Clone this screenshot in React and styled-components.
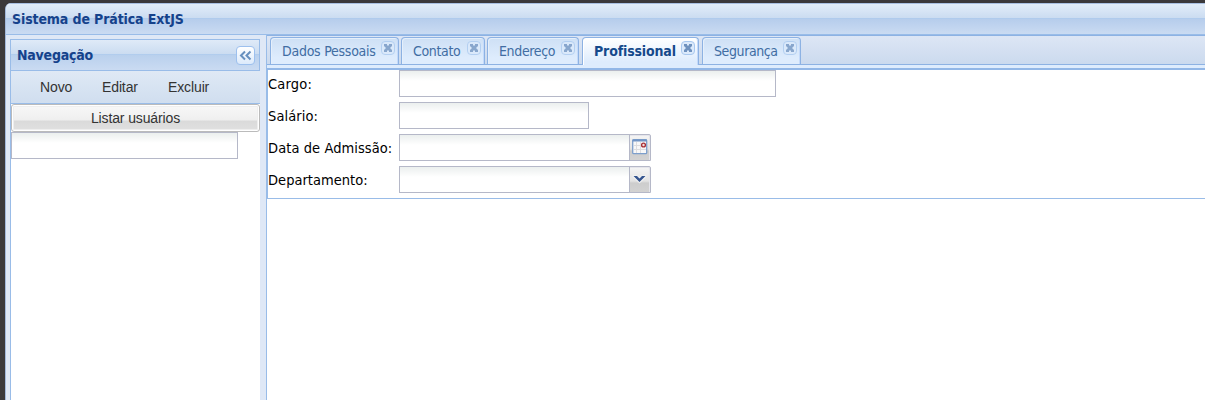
import React from "react";
import styled, { createGlobalStyle } from "styled-components";

const Global = createGlobalStyle`
  * { box-sizing: border-box; }
  html, body { margin: 0; height: 400px; overflow: hidden; background: #3b393b; }
  body { font-family: Tahoma, "DejaVu Sans Condensed", "DejaVu Sans", sans-serif; font-stretch: condensed; font-size: 14px; }
`;

const Page = styled.div`
  height: 400px;
  padding: 3px 0 0 5px;
  background: #3b393b;
`;

const Window = styled.div`
  height: 397px;
  display: flex;
  flex-direction: column;
  border-left: 1px solid #a2b8db;
  border-top-left-radius: 6px;
  background: #dfe8f6;
  overflow: hidden;
`;

const WindowHeader = styled.header`
  flex: none;
  height: 32px;
  padding: 0 0 0 6px;
  border-top: 1px solid #a9c0e2;
  border-bottom: 1px solid #99bce8;
  background: linear-gradient(#e2edf9 0, #cbdcf1 14px, #a9c9ee 14px, #b6cdec 15px, #cadbf2 30px);
`;

const Title = styled.div`
  color: #15428b;
  font-weight: bold;
  font-size: 14px;
  white-space: nowrap;
  line-height: ${(p) => p.$line}px;
  letter-spacing: ${(p) => p.$spacing}px;
`;

const Workspace = styled.div`
  flex: 1;
  display: flex;
  min-height: 0;
`;

const NavPanel = styled.aside`
  flex: none;
  width: 250px;
  margin: 4px 6px 0 4px;
  display: flex;
  flex-direction: column;
  background: #fff;
  border-left: 1px solid #99bce8;
`;

const NavHeader = styled.div`
  height: 32px;
  display: flex;
  justify-content: space-between;
  padding: 0 4px 0 6px;
  border: 1px solid #99bce8;
  border-left: 0;
  background: linear-gradient(#dfeaf8 0, #cbdcf1 14px, #a9c9ee 14px, #b9d0ed 15px, #cadbf2 30px);
`;

const CollapseButton = styled.button`
  width: 19px;
  height: 19px;
  margin: 6px 0 0;
  padding: 0;
  display: flex;
  align-items: center;
  justify-content: center;
  border: 1px solid #9dc0ee;
  border-radius: 4px;
  background: linear-gradient(#fff, #dceafb);
`;

const Toolbar = styled.div`
  height: 33px;
  display: flex;
  padding-left: 29px;
  border-bottom: 1px solid #99bce8;
  background: linear-gradient(#dfe9f5, #d0deef);
`;

const ToolbarItem = styled.span`
  width: ${(p) => p.$width}px;
  font: 14px/32px "Liberation Sans", Arial, sans-serif;
  letter-spacing: -0.12px;
  color: #333;
`;

const ListButton = styled.button`
  width: 249px;
  height: 28px;
  padding: 0;
  border: 1px solid #bbb;
  border-radius: 3px;
  background: linear-gradient(#f8f8f8 0, #efefef 15px, #dadada 16px, #e0e0e0 25px);
  box-shadow: inset 0 0 0 1px #fff, inset 0 0 0 2px #eee;
  font: 14px/26px "Liberation Sans", Arial, sans-serif;
  letter-spacing: -0.12px;
  color: #333;
`;

const TextInput = styled.input`
  display: block;
  width: ${(p) => p.$width}px;
  height: 27px;
  margin: 0;
  padding: 1px 3px;
  outline: 0;
  border: 1px solid #b5b8c8;
  border-radius: 0;
  background: linear-gradient(#ebefee, #fff 10px);
`;

const TabPanel = styled.main`
  flex: 1;
  min-width: 0;
  display: flex;
  flex-direction: column;
  background: #fff;
  border-left: 1px solid #99bce8;
`;

const TabBar = styled.div`
  height: 30px;
  display: flex;
  padding: 1px 0 0 3px;
  border-top: 1px solid #8db2e3;
  border-bottom: 1px solid #8db2e3;
  background: linear-gradient(#dde6f5, #cbdaee);
`;

const Tab = styled.div`
  flex: none;
  width: ${(p) => p.$width}px;
  height: ${(p) => (p.$active ? 28 : 27)}px;
  margin-right: ${(p) => p.$gap}px;
  display: flex;
  justify-content: space-between;
  padding: 0 3px 0 11px;
  border: 1px solid #8db2e3;
  border-bottom: 0;
  border-radius: 4px 4px 0 0;
  background: ${(p) =>
    p.$active
      ? "linear-gradient(#fff, #deecfd 24px)"
      : "linear-gradient(#cee0f5, #deecfd 20px)"};
  box-shadow: inset 1px 1px 0 ${(p) => (p.$active ? "#fff" : "#e5effb")}, inset -1px 0 0 #c4dafa;
  color: ${(p) => (p.$active ? "#15498b" : "#416da3")};
  font-weight: ${(p) => (p.$active ? "bold" : "normal")};
`;

const TabLabel = styled.span`
  line-height: 27px;
  white-space: nowrap;
  letter-spacing: ${(p) => p.$spacing}px;
`;

const CloseButton = styled.button`
  flex: none;
  width: 14px;
  height: 14px;
  margin: 3px 0 0;
  padding: 0;
  display: flex;
  align-items: center;
  justify-content: center;
  border: 1px solid #a8c8ef;
  border-radius: 4px;
  background: #dceafb;
  opacity: ${(p) => (p.$active ? 1 : 0.75)};
`;

const TabStrip = styled.div`
  height: 5px;
  border-bottom: 2px solid #92b7e7;
  background: #deecfd;
`;

const FormPanel = styled.form`
  height: 129px;
  display: flex;
  flex-direction: column;
  gap: 5px;
  margin: 0;
  border-left: 1px solid #99bce8;
  border-bottom: 1px solid #99bce8;
`;

const Field = styled.div`
  display: flex;
  height: 27px;
`;

const Label = styled.label`
  width: 131px;
  color: #000;
  font-size: 14.5px;
  line-height: 28px;
  white-space: nowrap;
  letter-spacing: ${(p) => p.$spacing}px;
`;

const Trigger = styled.button`
  width: 22px;
  height: 27px;
  margin-left: -1px;
  padding: 0;
  display: flex;
  justify-content: center;
  border: 1px solid #b5b8c8;
  border-radius: 0 2px 0 0;
  background: linear-gradient(#f5f5f5, #e3e3e3 14px, #cdcdcd 16px, #d2d2d2);
  box-shadow: inset -1px 1px 0 #e5e5eb;
`;

const Icon = styled.svg`
  display: block;
  flex: none;
`;

const TriggerIcon = styled(Icon)`
  margin-top: 4px;
`;

const CollapseIcon = () => (
  <Icon width="13" height="11" viewBox="0 0 13 11" fill="none" stroke="#6790bf" strokeWidth="2">
    <path d="M6 1.5 2 5.5l4 4M11.500 1.500l-4 4 4 4" />
  </Icon>
);

const CrossIcon = () => (
  <Icon width="8" height="8" viewBox="0 0 8 8" fill="#6f92bf">
    <path d="M0 0h3v1l1 1 1-1V0h3v2L6 4l2 2v2H5V7L4 6 3 7v1H0V6l2-2-2-2z" />
  </Icon>
);

const CalendarIcon = () => (
  <TriggerIcon width="16" height="16" viewBox="0 0 16 16">
    <rect x=".7" y=".7" width="14" height="14" rx="1" fill="#f8f8f8" stroke="#7d9fcc" strokeWidth="1.300" />
    <path d="M.5 1.500h14.500" stroke="#7295c5" strokeWidth="2" />
    <path d="M2 6.500h12M2 10.500h12M4.500 3v11M8.500 3v11" stroke="#dddddf" />
    <circle cx="11.500" cy="6" r="1.900" fill="#f3dede" stroke="#a83338" strokeWidth="1.400" />
  </TriggerIcon>
);

const ArrowIcon = () => (
  <TriggerIcon width="16" height="16" viewBox="0 0 16 16">
    <path d="M.5 4.500h5l2 2 2-2h5v1L7.500 12.500l-7-7z" fill="#fff" opacity=".6" />
    <path d="M1.500 5H5l2.500 2.500L10 5h3.500L7.500 11z" fill="#35558f" />
  </TriggerIcon>
);

const tabs = [
  { label: "Dados Pessoais", width: 129, gap: 2, spacing: -0.25 },
  { label: "Contato", width: 84, gap: 2, spacing: -0.35 },
  { label: "Endereço", width: 92, gap: 3, spacing: -0.35 },
  { label: "Profissional", width: 117, gap: 3, spacing: -0.15, active: true },
  { label: "Segurança", width: 99, gap: 0, spacing: -0.4 },
];

const fields = [
  { id: "cargo", label: "Cargo:", width: 377, spacing: 0.2 },
  { id: "salario", label: "Salário:", width: 190, spacing: 0.1 },
  { id: "admissao", label: "Data de Admissão:", width: 231, spacing: 0.08, icon: <CalendarIcon /> },
  { id: "departamento", label: "Departamento:", width: 231, spacing: 0.03, icon: <ArrowIcon /> },
];

export default function App() {
  return (
    <Page>
      <Global />
      <Window>
        <WindowHeader>
          <Title $line={30} $spacing={-0.12}>Sistema de Prática ExtJS</Title>
        </WindowHeader>
        <Workspace>
          <NavPanel>
            <NavHeader>
              <Title $line={30} $spacing={-0.22}>Navegação</Title>
              <CollapseButton aria-label="Recolher"><CollapseIcon /></CollapseButton>
            </NavHeader>
            <Toolbar>
              <ToolbarItem $width={62}>Novo</ToolbarItem>
              <ToolbarItem $width={66}>Editar</ToolbarItem>
              <ToolbarItem $width={50}>Excluir</ToolbarItem>
            </Toolbar>
            <ListButton>Listar usuários</ListButton>
            <TextInput $width={227} />
          </NavPanel>
          <TabPanel>
            <TabBar>
              {tabs.map((t) => (
                <Tab key={t.label} $width={t.width} $gap={t.gap} $active={t.active}>
                  <TabLabel $spacing={t.spacing}>{t.label}</TabLabel>
                  <CloseButton $active={t.active} aria-label="Fechar"><CrossIcon /></CloseButton>
                </Tab>
              ))}
            </TabBar>
            <TabStrip />
            <FormPanel>
              {fields.map((f) => (
                <Field key={f.id}>
                  <Label htmlFor={f.id} $spacing={f.spacing}>{f.label}</Label>
                  <TextInput id={f.id} $width={f.width} />
                  {f.icon && <Trigger type="button">{f.icon}</Trigger>}
                </Field>
              ))}
            </FormPanel>
          </TabPanel>
        </Workspace>
      </Window>
    </Page>
  );
}
